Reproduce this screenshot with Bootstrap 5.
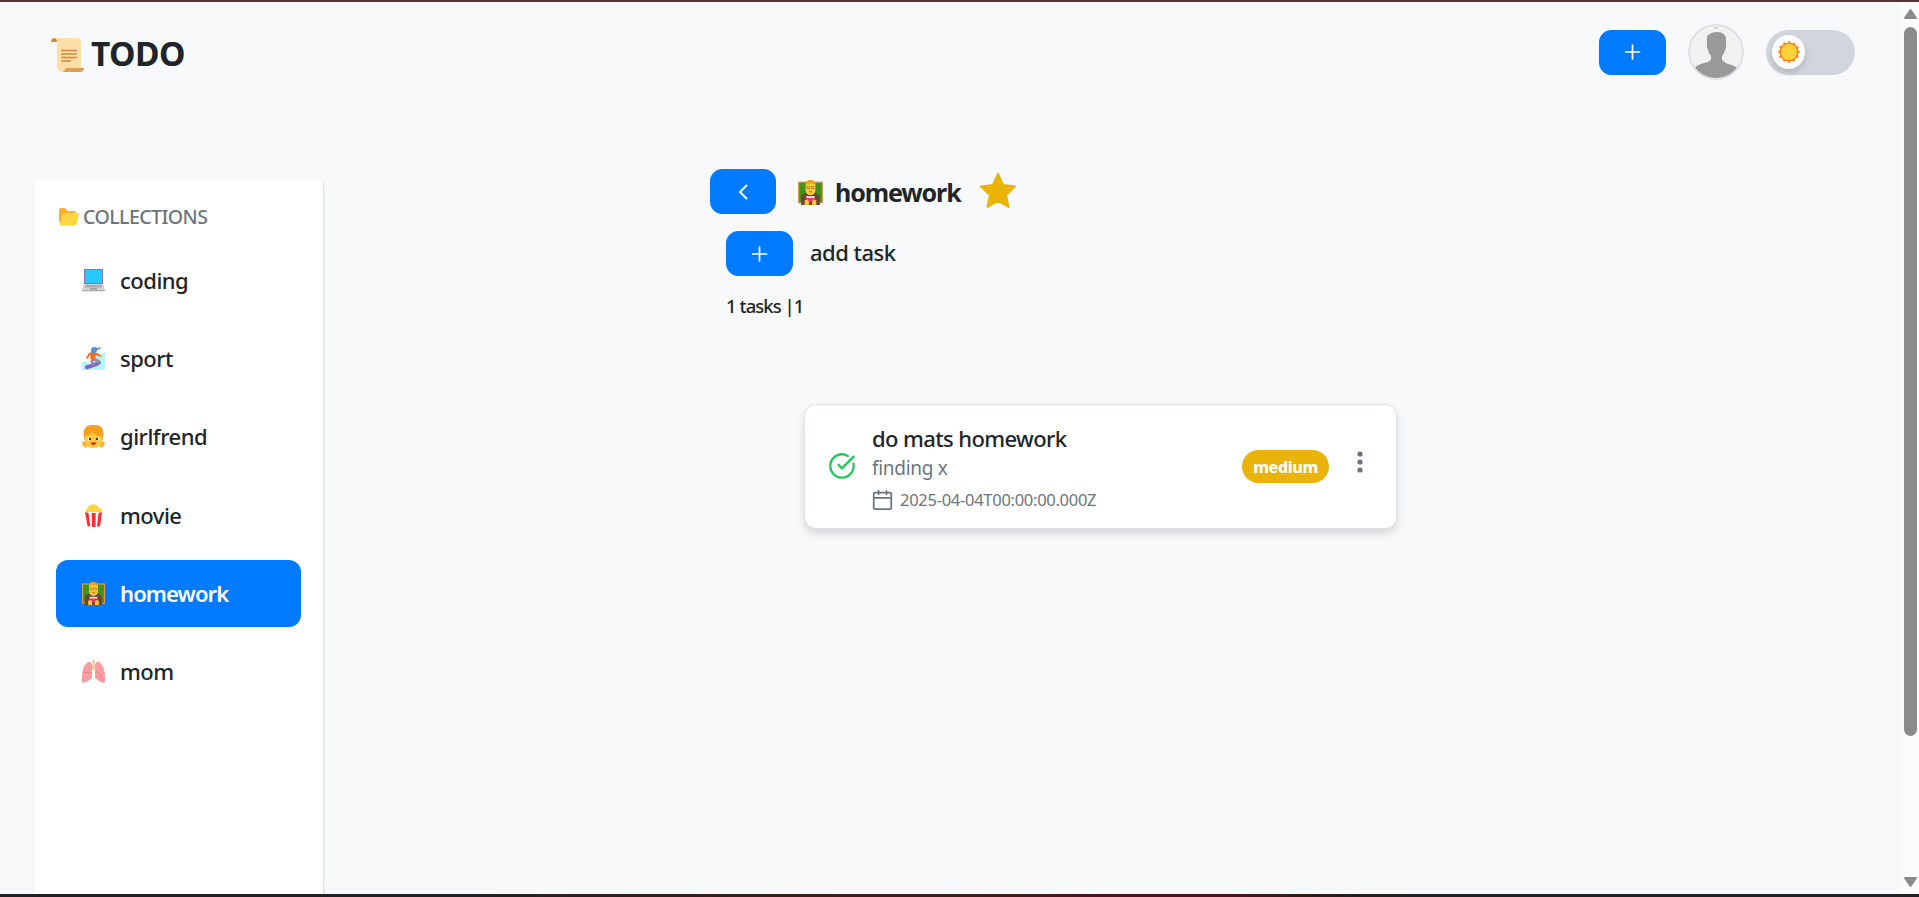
<!DOCTYPE html>
<html lang="en">
<head>
<meta charset="utf-8">
<meta name="viewport" content="width=device-width, initial-scale=1">
<title>TODO</title>
<link href="https://cdn.jsdelivr.net/npm/bootstrap@5.3.0/dist/css/bootstrap.min.css" rel="stylesheet">
<style>
html,body{height:100%}
body{font-family:"Noto Sans","Open Sans",sans-serif;background:#f8f9fb;color:#212529;overflow:hidden}
svg{display:block;flex:none}
.shell-top{height:2px;background:#533535}
.shell-bottom{height:3px;background:linear-gradient(90deg,#202124 0 25%,#3b1d18 42%,#3b2016 50%,#4d1220 58%,#4d1220 64%,#2e1c18 68%,#202124 73%)}
.page-area{height:892px}
.topbar{height:101px;padding:0 45px 0 51px}
.brand-text{font-size:33.5px;font-weight:700;line-height:48px;letter-spacing:-.6px;margin-left:7px}
.btn-main{--bs-btn-bg:#007bff;--bs-btn-border-color:#007bff;--bs-btn-color:#fff;width:67px;height:45px;border-radius:12px;padding:0}
.top-actions{gap:22px;margin-top:-1px}
.avatar{width:56px;height:56px;border:2px solid #dee2e6;background:#f1f1f1;overflow:hidden}
.theme-switch{width:89px;height:45px;background:#d1d5dd;padding-left:6px}
.theme-knob{width:33px;height:34px;background:#fff;box-shadow:0 4px 7px rgba(0,0,0,.15)}
.sidebar{width:290px;margin:78px 0 0 34px;padding:0 22px;background:#fff;border-right:1px solid #dee2e6;box-shadow:0 1px 3px rgba(0,0,0,.07)}
.side-title{height:66px;padding:6px 0 0 3px;color:#6c757d;font-size:19.6px;font-weight:500;letter-spacing:-.6px}
.coll-item{height:67px;margin-bottom:11.2px;border-radius:12px;padding-left:26px;gap:15px;font-size:22px;font-weight:550;letter-spacing:-.5px}
.coll-item.active{background:#007bff;color:#fff;font-weight:600;letter-spacing:-.9px}
.main-col{padding:66px 0 0 386px}
.coll-name{font-size:25px;font-weight:700;letter-spacing:-1.1px;line-height:40px}
.add-label{font-size:22px;font-weight:500;letter-spacing:-.5px;margin-top:-2px}
.count-line{font-size:18.4px;font-weight:550;letter-spacing:-.9px;line-height:30px}
.task-card{width:593px;height:125px;border:1px solid #dee2e6;border-radius:12px;background:#fff;box-shadow:0 5px 9px rgba(0,0,0,.13);padding:0 29px 0 23px}
.task-name{font-size:22px;font-weight:550;letter-spacing:-.6px;line-height:31px}
.task-note{font-size:19px;color:#6c757d;letter-spacing:-.3px;line-height:28px}
.task-date{font-size:16.5px;color:#6c757d;letter-spacing:-.28px;line-height:24px}
.tag-medium{width:87px;height:33px;background:#eab308;color:#fff;font-size:16px;font-weight:800;letter-spacing:-.4px}
.scroll-strip{width:19px;background:#fcfcfc;padding-left:1px}
.scroll-thumb{width:13px;height:709px;border-radius:7px;background:#8b8b8b}
</style>
</head>
<body>
<svg width="0" height="0" class="position-absolute">
 <defs>
  <symbol id="teacher" viewBox="0 0 24 24">
   <path fill="#d89b58" d="M0 1.500h24v21H0z"/><path fill="#43911b" d="M1.200 2.700h21.600v18.600H1.200z"/>
   <path fill="#6d4534" d="M3 24v-7c0-3 3-5 9-5s9 2 9 5v7z"/>
   <path fill="#f4a01c" d="M7.300 5C7 1.500 9 0 12 0s5 1.500 4.700 5z"/>
   <path fill="#ffc83d" d="M7.300 4.500C9 3 15 3 16.700 4.500V9.500c0 3-2 5-4.700 5s-4.700-2-4.700-5z"/>
   <path fill="none" stroke="#9b6a2c" stroke-width=".6" d="M8.500 6.300h2.800v2H8.500zM12.700 6.300h2.800v2h-2.800z"/>
   <path fill="none" stroke="#c24b24" stroke-width=".8" d="M10.500 11q1.500 .8 3 0"/>
   <path fill="#eee" d="M8 15.500h8v2H8z"/><path fill="#f92f60" d="M7.500 17.300h9v4h-9z"/>
   <path fill="#ffc83d" d="M6.500 19.500l3-.8 1 2.300V24h-4zM17.500 19.500l-3-.8-1 2.300V24h4z"/>
  </symbol>
  <symbol id="plus" viewBox="0 0 16 16"><path d="M7.500 1v14M.5 8h14" stroke="#fff" stroke-width="1.700" stroke-linecap="round"/></symbol>
 </defs>
</svg>
<div class="shell-top"></div>
<div class="page-area d-flex">
 <div class="flex-grow-1 d-flex flex-column">
  <header class="topbar d-flex align-items-center justify-content-between">
   <div class="d-flex align-items-center">
    <svg width="33" height="34" viewBox="0 0 33 34" class="mt-1"><path fill="#d3883e" d="M0 4q0-4 4-4l5 1v3z"/><path fill="#ffdea7" d="M3 0h23q4 0 4 4v26l-8 4H11q-5 0-5-5V5q0-5-3-5z"/><path fill="#e39d52" d="M15 30h18q0 4-4 4H11q3-1 4-4z"/><path stroke="#d3883e" stroke-width="1.300" d="M10 12.500h16M10 16h16M10 19.500h16M10 23h10"/></svg>
    <h1 class="brand-text mb-0">TODO</h1>
   </div>
   <div class="top-actions d-flex align-items-center">
    <button class="btn btn-main d-flex align-items-center justify-content-center"><svg width="16" height="16"><use href="#plus"/></svg></button>
    <div class="avatar rounded-circle"><svg width="52" height="52" viewBox="0 0 52 52"><path fill="#999" d="M17 15q-1-6 3-7 2-2 7-2 9 0 9 8v4q1 3-1 6-1 4-3 6v3q1 3 6 5 8 2 10 5v9H4v-9q2-4 10-6 6-1 7-4v-3q-2-2-3-6-2-3-1-6z"/><path d="M24 2h4" stroke="#bbb"/></svg></div>
    <div class="theme-switch rounded-pill d-flex align-items-center"><div class="theme-knob rounded-circle d-flex align-items-center justify-content-center"><svg width="22" height="22" viewBox="0 0 22 22"><circle cx="11" cy="11" r="9.600" fill="#ff8224"/><circle cx="11" cy="11" r="9.700" fill="none" stroke="#ff8224" stroke-width="2.400" stroke-linecap="round" stroke-dasharray="0 5.079"/><circle cx="11" cy="11" r="8" fill="#ffd23c"/></svg></div></div>
   </div>
  </header>
  <div class="d-flex flex-grow-1">
   <aside class="sidebar">
    <div class="side-title d-flex align-items-center"><svg width="20" height="18" viewBox="0 0 20 18" class="me-1"><path fill="#ffb02e" d="M0 2q0-2 2-2h3q1 0 2 1l2 2h6q2 0 2 2v10H2q-2 0-2-2z"/><path fill="#fcd53f" d="M6 5h12.500q2 0 1.300 2l-2 8.500Q17.200 17.500 16 17.500H2q-1.500 0-1-2L3.500 7Q4 5 6 5z"/></svg>COLLECTIONS</div>
    <nav>
     <div class="coll-item d-flex align-items-center"><svg width="23" height="23" viewBox="0 0 23 23"><path fill="#8c6fb2" d="M2 0h19v15H2z"/><path fill="#26c9fc" d="M3 1h17v13H3z"/><path fill="#d3d3d3" d="M2 15h19l2 6H0z"/><path fill="#aaa" d="M3.500 16h16l.7 2.500H2.800zM0 21h23v1.300H0z"/><path fill="#8b8b8b" d="M8 19.300h7v1.200H8z"/></svg><span>coding</span></div>
     <div class="coll-item d-flex align-items-center"><svg width="23" height="23" viewBox="0 0 23 23"><path fill="#b4f4ff" d="M0 16l3-2 6 3 6-9 8-3v18H0z"/><path fill="#8065c7" d="M3 20q0-2 3-2l11-4q2 0 2 2-1 2-4 3l-9 3q-3 1-3-2z"/><path fill="none" stroke="#998ea0" stroke-width="3" d="M12 11l-2 3 1 4M12 12l4 2-1 2"/><path fill="#ff6723" d="M7 6q4-2 8 0l4 2-1 2-4-2-1 4H8l1-4-2 1-1 3-2-1z"/><path fill="#5092d8" d="M9 4q0-4 3-4 2 0 3 1l4-1-1 2-3 1q0 3-3 3t-3-2z"/><circle cx="19" cy="10" r="1" fill="#ffc83d"/></svg><span>sport</span></div>
     <div class="coll-item d-flex align-items-center"><svg width="23" height="23" viewBox="0 0 23 23"><path fill="#f3a11d" d="M1.500 9q0-9 8.500-9h3q8.500 0 8.500 9l-1 6h-18z"/><path fill="#ffb02e" d="M0 17q4 0 4-3l3 4-3 5-3-2zM23 17q-4 0-4-3l-3 4 3 5 3-2z"/><path fill="#ffc83d" d="M3 11q5-1 7-4 4 4 10 4v4q0 8-8.500 8T3 15z"/><ellipse cx="7.500" cy="14" rx="1.800" ry="1.500" fill="#fff"/><ellipse cx="15.500" cy="14" rx="1.800" ry="1.500" fill="#fff"/><circle cx="8" cy="14" r="1.200" fill="#402a32"/><circle cx="15" cy="14" r="1.200" fill="#402a32"/><path fill="#bb1d35" d="M8.500 17.500h6q-1 2.500-3 2.500t-3-2.500z"/></svg><span>girlfrend</span></div>
     <div class="coll-item d-flex align-items-center"><svg width="23" height="23" viewBox="0 0 23 23"><path fill="#fcd53f" d="M4 8q-1-3 2-4 1-3 4-3 1-2 3 0 3 0 4 3 4 1 3 4z"/><path fill="#fff" d="M5 8h14l-2 15H7z"/><path fill="#ff2f35" d="M3 8l3.500 1 1.800 13.500H6.500Q5.500 22 5.300 21zM9.700 9h4L13.500 23h-3.500zM20 8l-3.500 1-1.500 13.500H17q1 0 1.300-1.500z"/></svg><span>movie</span></div>
     <div class="coll-item active d-flex align-items-center"><svg width="23" height="23"><use href="#teacher"/></svg><span>homework</span></div>
     <div class="coll-item d-flex align-items-center"><svg width="23" height="23" viewBox="0 0 23 23"><path fill="#fa9da1" d="M10 5Q9 1 6 2 1 5 0 15v7q2 2 6-1l4-3zM13 5q1-4 4-3 5 3 6 13v7q-2 2-6-1l-4-3z"/><path stroke="#e9787f" stroke-width=".8" fill="none" d="M1 12l8 1M14 11l4 4 3 6"/><path stroke="#f3c586" stroke-width="2" fill="none" d="M11.500 0v7l-2 3M11.500 7l2 3"/></svg><span>mom</span></div>
    </nav>
   </aside>
   <main class="main-col">
    <div class="d-flex align-items-center" style="height:45px">
     <button class="btn btn-main d-flex align-items-center justify-content-center" style="width:66px"><svg width="10" height="16" viewBox="0 0 10 16"><path fill="none" stroke="#fff" stroke-width="1.800" stroke-linecap="round" stroke-linejoin="round" d="M8.500 1.500L2 8l6.500 6.500"/></svg></button>
     <svg width="25" height="25" style="margin:2px 12px 0 22px"><use href="#teacher"/></svg>
     <h2 class="coll-name mb-0">homework</h2>
     <svg width="36" height="35" viewBox="0 0 36 35" style="margin:-3px 0 0 19px"><path fill="#eab308" stroke="#eab308" stroke-width="2" stroke-linejoin="round" d="M18 1l5 11 12 1.500-9 8.500 2.500 12L18 28 7.500 34 10 22 1 13.500 13 12z"/></svg>
    </div>
    <div class="d-flex align-items-center" style="margin:17px 0 0 16px;gap:17px">
     <button class="btn btn-main d-flex align-items-center justify-content-center"><svg width="16" height="16"><use href="#plus"/></svg></button>
     <span class="add-label">add task</span>
    </div>
    <div class="count-line" style="margin:15px 0 0 16px">1 tasks |1</div>
    <div class="task-card d-flex align-items-center" style="margin:83px 0 0 94px">
     <svg width="28" height="28" viewBox="0 0 24 24" fill="none" stroke="#22c55e" stroke-width="2" stroke-linecap="round" stroke-linejoin="round" style="margin-top:-2px"><path d="M21.800 10A10 10 0 1 1 17 3.340"/><path d="m9 11 3 3L22 4"/></svg>
     <div class="flex-grow-1" style="margin-left:16px;padding-top:1px">
      <div class="task-name">do mats homework</div>
      <div class="task-note">finding x</div>
      <div class="task-date d-flex align-items-center" style="gap:7px;margin-top:6px"><svg width="21" height="22" viewBox="0 0 24 24" fill="none" stroke="#6b7280" stroke-width="2" stroke-linecap="round"><path d="M7.500 1.500v4M16.500 1.500v4M2 9.500h20"/><rect x="2" y="3.500" width="20" height="19" rx="1.500"/></svg>2025-04-04T00:00:00.000Z</div>
     </div>
     <span class="tag-medium rounded-pill d-flex align-items-center justify-content-center">medium</span>
     <svg width="6" height="22" viewBox="0 0 6 22" style="margin:-9px 4px 0 28px" fill="#6b7280"><circle cx="3" cy="3" r="2.600"/><circle cx="3" cy="11" r="2.600"/><circle cx="3" cy="19" r="2.600"/></svg>
    </div>
   </main>
  </div>
 </div>
 <div class="scroll-strip d-flex flex-column align-items-center pt-1">
  <svg width="13" height="11" viewBox="0 0 13 11" style="margin-top:2px"><path fill="#8b8b8b" stroke="#8b8b8b" stroke-width="2" stroke-linejoin="round" d="M6.500 2L12 10H1z"/></svg>
  <div class="scroll-thumb" style="margin-top:8px"></div>
  <svg width="13" height="11" viewBox="0 0 13 11" class="mt-auto" style="margin-bottom:6px"><path fill="#8b8b8b" stroke="#8b8b8b" stroke-width="2" stroke-linejoin="round" d="M6.500 9L1 1h11z"/></svg>
 </div>
</div>
<div class="shell-bottom"></div>
<script src="https://cdn.jsdelivr.net/npm/bootstrap@5.3.0/dist/js/bootstrap.bundle.min.js"></script>
</body>
</html>
